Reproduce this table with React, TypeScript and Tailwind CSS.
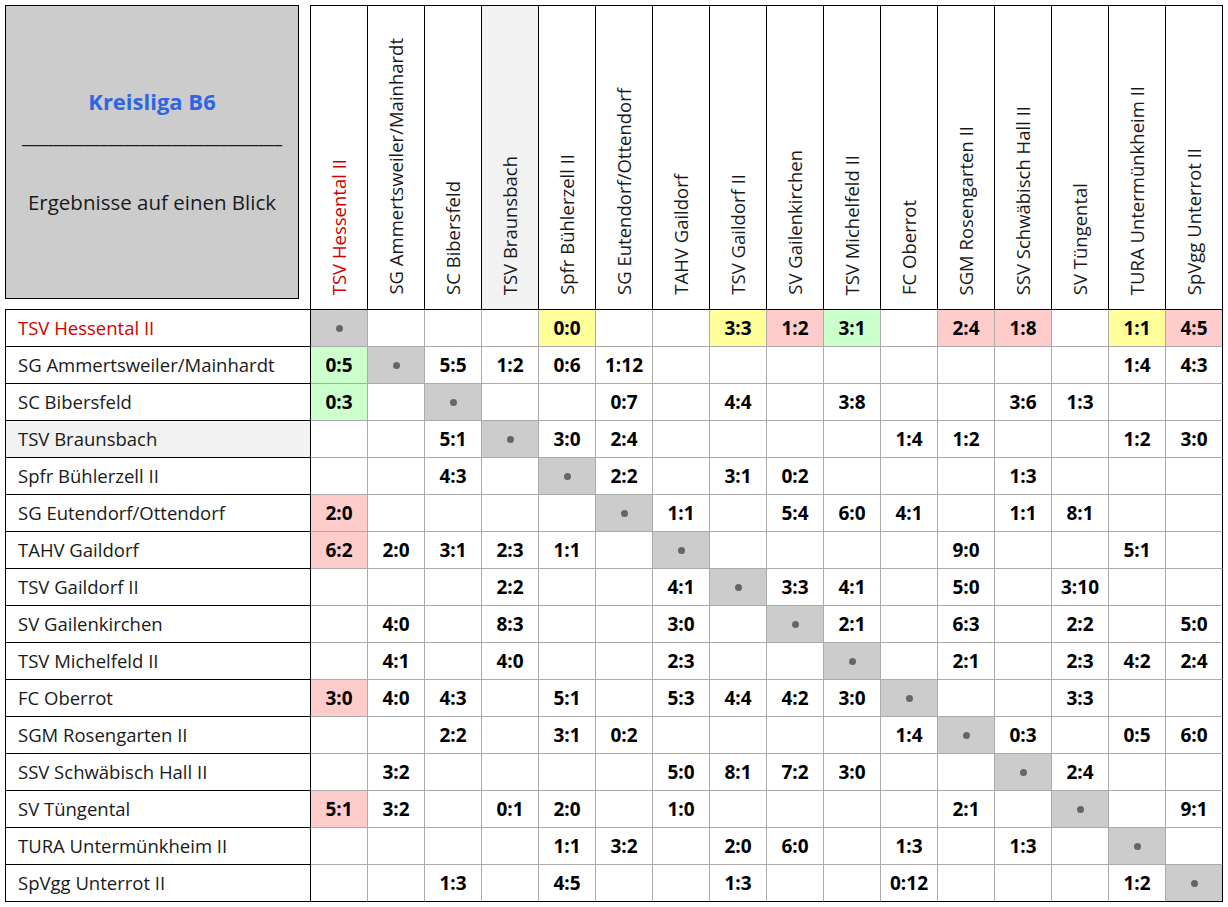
import React from "react";

const teams = [
  "TSV Hessental II",
  "SG Ammertsweiler/Mainhardt",
  "SC Bibersfeld",
  "TSV Braunsbach",
  "Spfr Bühlerzell II",
  "SG Eutendorf/Ottendorf",
  "TAHV Gaildorf",
  "TSV Gaildorf II",
  "SV Gailenkirchen",
  "TSV Michelfeld II",
  "FC Oberrot",
  "SGM Rosengarten II",
  "SSV Schwäbisch Hall II",
  "SV Tüngental",
  "TURA Untermünkheim II",
  "SpVgg Unterrot II",
];

// key = column (1-based), suffix g/r/y = cell colour, "*" = own team
const results: Record<number, string>[] = [
  { 1: "*", 5: "0:0y", 8: "3:3y", 9: "1:2r", 10: "3:1g", 12: "2:4r", 13: "1:8r", 15: "1:1y", 16: "4:5r" },
  { 1: "0:5g", 2: "*", 3: "5:5", 4: "1:2", 5: "0:6", 6: "1:12", 15: "1:4", 16: "4:3" },
  { 1: "0:3g", 3: "*", 6: "0:7", 8: "4:4", 10: "3:8", 13: "3:6", 14: "1:3" },
  { 3: "5:1", 4: "*", 5: "3:0", 6: "2:4", 11: "1:4", 12: "1:2", 15: "1:2", 16: "3:0" },
  { 3: "4:3", 5: "*", 6: "2:2", 8: "3:1", 9: "0:2", 13: "1:3" },
  { 1: "2:0r", 6: "*", 7: "1:1", 9: "5:4", 10: "6:0", 11: "4:1", 13: "1:1", 14: "8:1" },
  { 1: "6:2r", 2: "2:0", 3: "3:1", 4: "2:3", 5: "1:1", 7: "*", 12: "9:0", 15: "5:1" },
  { 4: "2:2", 7: "4:1", 8: "*", 9: "3:3", 10: "4:1", 12: "5:0", 14: "3:10" },
  { 2: "4:0", 4: "8:3", 7: "3:0", 9: "*", 10: "2:1", 12: "6:3", 14: "2:2", 16: "5:0" },
  { 2: "4:1", 4: "4:0", 7: "2:3", 10: "*", 12: "2:1", 14: "2:3", 15: "4:2", 16: "2:4" },
  { 1: "3:0r", 2: "4:0", 3: "4:3", 5: "5:1", 7: "5:3", 8: "4:4", 9: "4:2", 10: "3:0", 11: "*", 14: "3:3" },
  { 3: "2:2", 5: "3:1", 6: "0:2", 11: "1:4", 12: "*", 13: "0:3", 15: "0:5", 16: "6:0" },
  { 2: "3:2", 7: "5:0", 8: "8:1", 9: "7:2", 10: "3:0", 13: "*", 14: "2:4" },
  { 1: "5:1r", 2: "3:2", 4: "0:1", 5: "2:0", 7: "1:0", 12: "2:1", 14: "*", 16: "9:1" },
  { 5: "1:1", 6: "3:2", 8: "2:0", 9: "6:0", 11: "1:3", 13: "1:3", 15: "*" },
  { 3: "1:3", 5: "4:5", 8: "1:3", 11: "0:12", 15: "1:2", 16: "*" },
];

const fills: Record<string, string> = {
  g: "bg-[#ccffcc]",
  r: "bg-[#ffcccc]",
  y: "bg-[#ffff99]",
};

function ScoreCell({ value, row, col }: { value?: string; row: number; col: number }) {
  const last = col === 16;
  const bottom = row === 15;
  let bg = "bg-white";
  let text = value ?? "";
  if (value === "*") bg = "bg-[#cccccc]";
  else if (value && fills[value.slice(-1)]) {
    bg = fills[value.slice(-1)];
    text = value.slice(0, -1);
  }
  return (
    <div
      className={`flex h-[37px] items-center justify-center border-r border-b ${bg} ${
        last ? "border-r-black" : "border-r-[#ababab]"
      } ${bottom ? "border-b-black" : "border-b-[#ababab]"}`}
    >
      {value === "*" ? (
        <span className="h-[7px] w-[7px] rounded-full bg-[#666666]" />
      ) : (
        <span className="text-[19px] font-bold text-black">{text}</span>
      )}
    </div>
  );
}

export default function App() {
  return (
    <div className="min-h-screen bg-white pl-[5px] pt-[5px] font-['Open_Sans',sans-serif]">
      <div className="grid grid-cols-[306px_repeat(16,57px)]">
        <div className="h-[305px] border-r border-b border-black">
          <div className="flex h-[294px] w-[294px] flex-col items-center border border-black bg-[#cccccc]">
            <div className="mt-[84px] text-[22px] font-bold leading-none text-[#2f66e0]">Kreisliga B6</div>
            <div className="mt-[11px] h-[26px] whitespace-nowrap text-[18px] leading-[26px] text-[#1a1a1a]">
              _________________________________
            </div>
            <div className="mt-[43px] text-[20.5px] leading-none text-[#1a1a1a]">Ergebnisse auf einen Blick</div>
          </div>
        </div>
        {teams.map((team, i) => (
          <div
            key={team}
            className={`flex h-[305px] items-end justify-center border-t border-r border-b border-black pb-[14px] ${
              i === 3 ? "bg-[#f2f2f2]" : "bg-white"
            }`}
          >
            <span
              className={`rotate-180 whitespace-nowrap text-[18.5px] leading-[24px] [writing-mode:vertical-rl] ${
                i === 0 ? "text-[#d00000]" : "text-[#1a1a1a]"
              }`}
            >
              {team}
            </span>
          </div>
        ))}
        {teams.map((team, r) => (
          <React.Fragment key={team}>
            <div
              className={`flex h-[37px] items-center border-r border-b border-l border-black pl-[12px] text-[18.5px] ${
                r === 3 ? "bg-[#f2f2f2]" : "bg-white"
              } ${r === 0 ? "text-[#d00000]" : "text-[#1a1a1a]"}`}
            >
              {team}
            </div>
            {teams.map((_, c) => (
              <ScoreCell key={c} value={results[r][c + 1]} row={r} col={c + 1} />
            ))}
          </React.Fragment>
        ))}
      </div>
    </div>
  );
}
